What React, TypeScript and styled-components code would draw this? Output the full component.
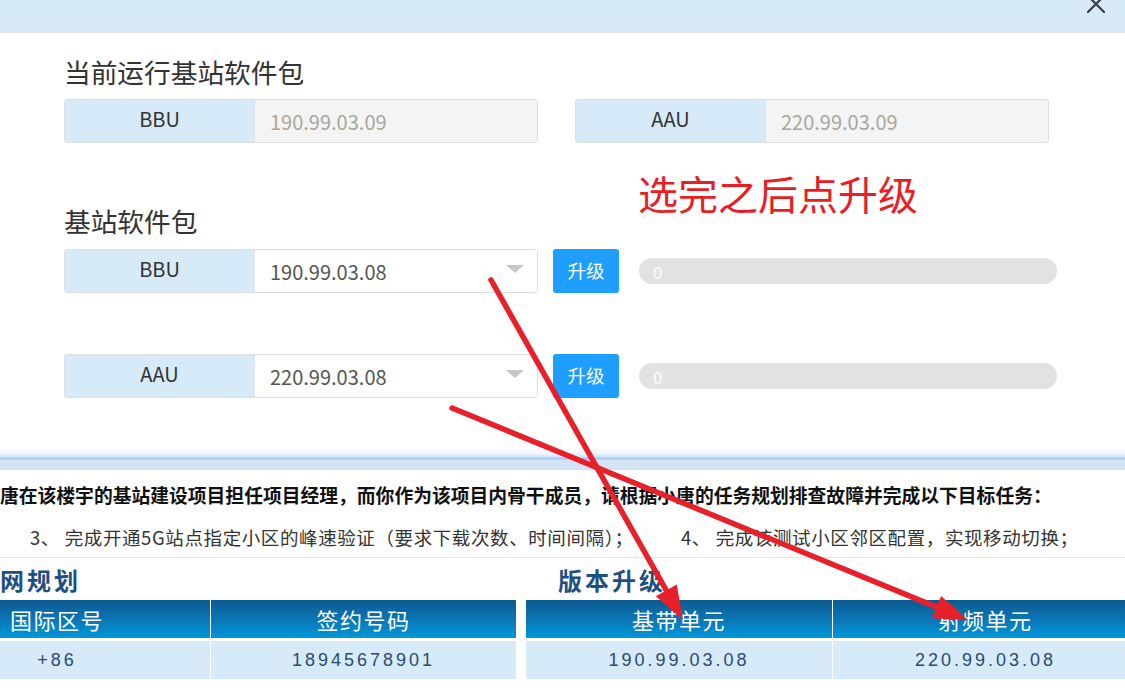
import React from "react";
import styled, { createGlobalStyle } from "styled-components";

const GlobalStyle = createGlobalStyle`
  html, body { margin: 0; padding: 0; background: #fff; }
  body {
    font-family: "Noto Sans CJK SC", "Noto Sans", sans-serif;
    overflow: hidden;
  }
  * { box-sizing: border-box; }
`;

const Screen = styled.div`
  position: relative;
  width: 1125px;
  height: 695px;
  overflow: hidden;
  background: #fff;
`;

const Modal = styled.section`
  display: flex;
  flex-direction: column;
`;

const ModalHeader = styled.header`
  height: 33px;
  background: #d6eaf8;
  border-bottom: 1px solid #e4e4e4;
  display: flex;
  justify-content: flex-end;
  align-items: flex-start;
  padding-right: 20px;
`;

const CloseIcon = styled.svg`
  width: 18px;
  height: 18px;
  margin-top: -5px;
  color: #3b3d4a;
`;

const ModalBody = styled.div`
  display: flex;
  flex-direction: column;
  padding: 24px 0 49px 64px;
`;

const SectionTitle = styled.h2<{ $mt?: number }>`
  margin: ${(p) => p.$mt ?? 0}px 0 0;
  font-size: 26.7px;
  line-height: 30px;
  font-weight: 400;
  color: #333;
  white-space: nowrap;
`;

const FieldRow = styled.div<{ $mt: number; $gap: number }>`
  display: flex;
  align-items: center;
  margin-top: ${(p) => p.$mt}px;
  gap: ${(p) => p.$gap}px;
`;

const Field = styled.div`
  display: flex;
  width: 474px;
  height: 44px;
  border: 1px solid #dedede;
  border-radius: 3px;
  overflow: hidden;
  flex: none;
`;

const FieldLabel = styled.div`
  width: 189px;
  flex: none;
  background: #d6eaf8;
  color: #333;
  font-size: 20px;
  display: flex;
  align-items: center;
  justify-content: center;
  padding-bottom: 6px;
`;

const FieldValue = styled.div<{ $readonly?: boolean }>`
  flex: 1;
  display: flex;
  align-items: center;
  padding: 0 0 0 15px;
  border-left: 1px solid #e2e2e2;
  background: ${(p) => (p.$readonly ? "#f4f4f4" : "#fff")};
  color: ${(p) => (p.$readonly ? "#aaa69c" : "#555")};
  font-size: 20px;
`;

const Caret = styled.span`
  margin-left: auto;
  margin-right: 13px;
  margin-top: -4px;
  width: 0;
  height: 0;
  border-left: 9px solid transparent;
  border-right: 9px solid transparent;
  border-top: 8px solid #c6c6c6;
`;

const UpgradeButton = styled.button`
  width: 66px;
  height: 44px;
  flex: none;
  border: none;
  border-radius: 3px;
  background: #1e9fff;
  color: #fff;
  font-family: inherit;
  font-size: 18.5px;
  padding: 0 0 2px;
`;

const Progress = styled.div`
  width: 418px;
  height: 26px;
  flex: none;
  border-radius: 13px;
  background: #e2e2e2;
  color: #fdfdfd;
  font-size: 17px;
  display: flex;
  align-items: center;
  padding-left: 14px;
  margin-left: 5px;
`;

const Strip = styled.div`
  height: 23px;
  background: linear-gradient(
    to bottom,
    #ffffff 0px,
    #f1f7fe 6px,
    #d2e4fb 10px,
    #a9c9f1 11px,
    #a4c6f0 12px,
    #d4e4f4 13px,
    #d4e4f4 23px
  );
`;

const TaskPanel = styled.div`
  display: flex;
  flex-direction: column;
  gap: 18px;
  padding: 13px 0 8px;
  border-bottom: 1px solid #e6e6e6;
`;

const TaskLead = styled.p`
  margin: 0;
  font-size: 18.8px;
  line-height: 24px;
  font-weight: 700;
  color: #111;
  white-space: nowrap;
`;

const TaskItems = styled.div`
  display: grid;
  grid-template-columns: 651px auto;
  padding-left: 30px;
  font-size: 18.5px;
  letter-spacing: 0.6px;
  line-height: 24px;
  color: #333;
  white-space: nowrap;
`;

const Tables = styled.div`
  display: flex;
  gap: 10px;
  margin-left: -96px;
`;

const TableBlock = styled.div`
  width: 612px;
  flex: none;
`;

const BlockTitle = styled.h3<{ $indent: number }>`
  margin: 0;
  height: 42px;
  padding: 1px 0 0 ${(p) => p.$indent}px;
  font-size: 24px;
  line-height: 42px;
  font-weight: 700;
  letter-spacing: 3px;
  color: #1e4f82;
  white-space: nowrap;
`;

const Grid = styled.div`
  display: grid;
  grid-template-columns: 1fr 1fr;
  row-gap: 3px;
`;

const HeadCell = styled.div`
  height: 38px;
  display: flex;
  align-items: center;
  justify-content: center;
  background: linear-gradient(to bottom, #0e5a8f 0%, #0a78b8 55%, #0098da 100%);
  color: #fff;
  font-size: 22px;
  letter-spacing: 1.5px;
  & + & { border-left: 1px solid #fff; }
`;

const DataCell = styled.div`
  height: 38px;
  display: flex;
  align-items: center;
  justify-content: center;
  background: #d6eaf8;
  color: #2a4b73;
  font-family: "Liberation Sans", Arial, sans-serif;
  font-size: 18px;
  letter-spacing: 3px;
  & + & { border-left: 1px solid #fff; }
`;

const Annotation = styled.div`
  position: absolute;
  inset: 0;
  pointer-events: none;
`;

const Hint = styled.div`
  position: absolute;
  left: 638px;
  top: 171px;
  font-size: 40px;
  line-height: 44px;
  color: #ec1c24;
  white-space: nowrap;
`;

const ArrowSvg = styled.svg`
  position: absolute;
  left: 0;
  top: 0;
`;

type Pt = [number, number];

function Arrow({ from, to }: { from: Pt; to: Pt }) {
  const [x1, y1] = from;
  const [x2, y2] = to;
  const len = Math.hypot(x2 - x1, y2 - y1);
  const ux = (x2 - x1) / len;
  const uy = (y2 - y1) / len;
  const headLen = 34;
  const half = 12;
  const bx = x2 - ux * headLen;
  const by = y2 - uy * headLen;
  const px = -uy;
  const py = ux;
  const pts = `${x2},${y2} ${bx + px * half},${by + py * half} ${bx - px * half},${by - py * half}`;
  return (
    <g>
      <line x1={x1} y1={y1} x2={bx + ux * 4} y2={by + uy * 4} stroke="#e8202a" strokeWidth={5.5} strokeLinecap="round" />
      <polygon points={pts} fill="#e8202a" />
    </g>
  );
}

export default function App() {
  return (
    <>
      <GlobalStyle />
      <Screen>
        <Modal>
          <ModalHeader>
            <CloseIcon viewBox="0 0 18 18" fill="none">
              <path d="M1 1 L17 17 M17 1 L1 17" stroke="currentColor" strokeWidth={2.2} strokeLinecap="round" />
            </CloseIcon>
          </ModalHeader>
          <ModalBody>
            <SectionTitle>当前运行基站软件包</SectionTitle>
            <FieldRow $mt={12} $gap={37}>
              <Field>
                <FieldLabel>BBU</FieldLabel>
                <FieldValue $readonly>190.99.03.09</FieldValue>
              </Field>
              <Field>
                <FieldLabel>AAU</FieldLabel>
                <FieldValue $readonly>220.99.03.09</FieldValue>
              </Field>
            </FieldRow>
            <SectionTitle $mt={63}>基站软件包</SectionTitle>
            <FieldRow $mt={13} $gap={15}>
              <Field>
                <FieldLabel>BBU</FieldLabel>
                <FieldValue>
                  190.99.03.08
                  <Caret />
                </FieldValue>
              </Field>
              <UpgradeButton>升级</UpgradeButton>
              <Progress>0</Progress>
            </FieldRow>
            <FieldRow $mt={61} $gap={15}>
              <Field>
                <FieldLabel>AAU</FieldLabel>
                <FieldValue>
                  220.99.03.08
                  <Caret />
                </FieldValue>
              </Field>
              <UpgradeButton>升级</UpgradeButton>
              <Progress>0</Progress>
            </FieldRow>
          </ModalBody>
        </Modal>
        <Strip />
        <TaskPanel>
          <TaskLead>
            唐在该楼宇的基站建设项目担任项目经理，而你作为该项目内骨干成员，请根据小唐的任务规划排查故障并完成以下目标任务：
          </TaskLead>
          <TaskItems>
            <span>3、 完成开通5G站点指定小区的峰速验证（要求下载次数、时间间隔）；</span>
            <span>4、 完成该测试小区邻区配置，实现移动切换；</span>
          </TaskItems>
        </TaskPanel>
        <Tables>
          <TableBlock>
            <BlockTitle $indent={96}>网规划</BlockTitle>
            <Grid>
              <HeadCell>国际区号</HeadCell>
              <HeadCell>签约号码</HeadCell>
              <DataCell>+86</DataCell>
              <DataCell>18945678901</DataCell>
            </Grid>
          </TableBlock>
          <TableBlock>
            <BlockTitle $indent={32}>版本升级</BlockTitle>
            <Grid>
              <HeadCell>基带单元</HeadCell>
              <HeadCell>射频单元</HeadCell>
              <DataCell>190.99.03.08</DataCell>
              <DataCell>220.99.03.08</DataCell>
            </Grid>
          </TableBlock>
        </Tables>
        <Annotation>
          <Hint>选完之后点升级</Hint>
          <ArrowSvg width={1125} height={695} viewBox="0 0 1125 695">
            <Arrow from={[491, 280]} to={[683, 620]} />
            <Arrow from={[452, 408]} to={[968, 620]} />
          </ArrowSvg>
        </Annotation>
      </Screen>
    </>
  );
}
